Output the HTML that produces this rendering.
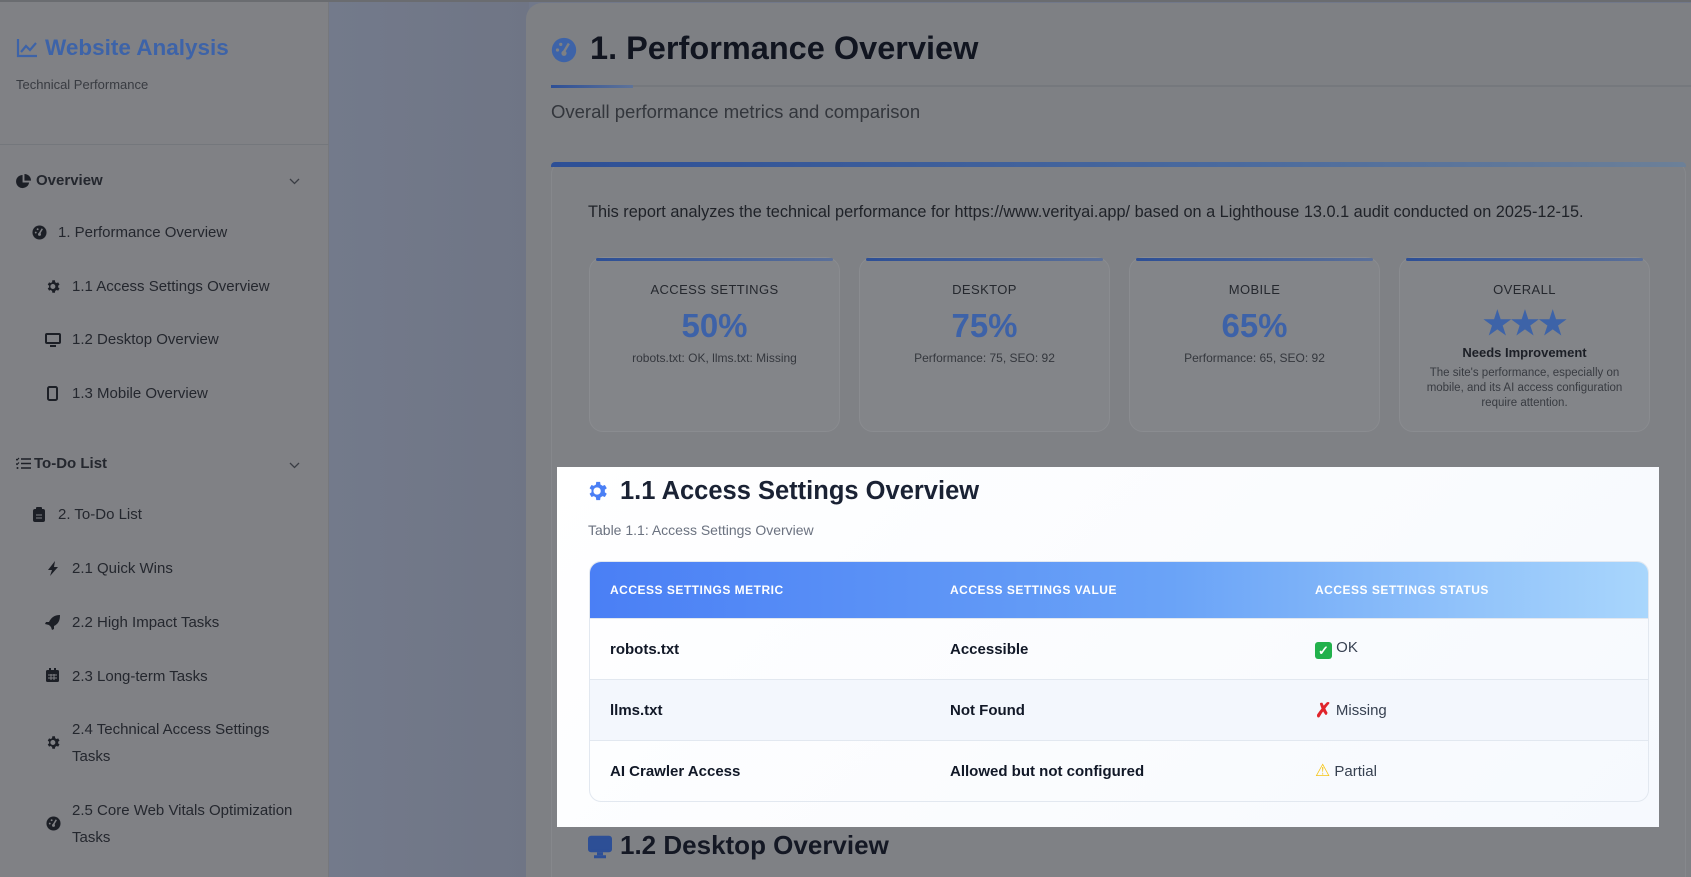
<!DOCTYPE html>
<html><head><meta charset="utf-8"><style>
*{margin:0;padding:0;box-sizing:border-box}
html,body{width:1691px;height:877px;overflow:hidden}
body{background:#71788a;font-family:"Liberation Sans",sans-serif;position:relative;color:#1c1f26}
.a{position:absolute;white-space:nowrap}
#top{position:absolute;left:0;top:0;width:1691px;height:2px;background:#6a6c70;z-index:5}
#side{position:absolute;left:0;top:0;width:329px;height:877px;background:#808185;border-right:1px solid #76787d}
#gap{position:absolute;left:329px;top:0;width:200px;height:877px;background:linear-gradient(90deg,#737a8b,#6f7585)}
#main{position:absolute;left:526px;top:3px;width:1165px;height:874px;background:#7e8084;border-radius:16px 0 0 0}
.nav{font-size:15px;color:#24272e}
.ic{position:absolute}
.box{position:absolute;left:551px;top:162px;width:1135px;height:715px;background:#7f8185;border:1px solid #86888c;border-bottom:none;border-radius:12px 12px 0 0}
.bar{position:absolute;left:551px;top:162px;width:1135px;height:5px;border-radius:4px 4px 0 0;background:linear-gradient(90deg,#2d4f96,#4a6a9e 60%,#6c8098)}
.card{position:absolute;top:257px;width:251px;height:175px;background:#838589;border:1px solid #8a8c90;border-radius:14px;text-align:center}
.card .t{position:absolute;top:0;left:6px;right:6px;height:3px;background:linear-gradient(90deg,#2d4f96,#5b7099);border-radius:2px}
.lab{position:absolute;top:24px;width:100%;font-size:13px;letter-spacing:.4px;color:#25282e}
.pct{position:absolute;top:49px;width:100%;font-size:33px;font-weight:bold;color:#3d62a8}
.sub{position:absolute;top:93px;width:100%;font-size:12px;color:#34373d}
#hl{position:absolute;left:557px;top:467px;width:1102px;height:360px;background:linear-gradient(135deg,#ffffff,#f6f9fe);z-index:20}
table{position:absolute;left:32px;top:94px;width:1060px;border-collapse:separate;border-spacing:0;border:1px solid #e2e8f0;border-radius:12px;overflow:hidden}
th{height:56px;text-align:left;font-size:12px;color:#fff;letter-spacing:.5px;padding-left:20px;background:transparent}
thead tr{background:linear-gradient(90deg,#4a7ff5,#6aa3f7 55%,#a9d6fc)}
td{height:61px;padding-left:20px;font-size:15px;font-weight:bold;color:#111827;border-top:1px solid #e2e8f0}
td.s{font-weight:normal;color:#374151}
tr.alt td{background:#f3f7fd}
</style></head><body>
<svg width="0" height="0" style="position:absolute"><defs>
<path id="gear" d="M12 8a4 4 0 1 0 0 8 4 4 0 0 0 0-8zm8.4 5.3l2.2 1.7-2.1 3.6-2.6-1a8 8 0 0 1-2.2 1.3L15.3 22h-4.2l-.4-3.1a8 8 0 0 1-2.2-1.3l-2.6 1-2.1-3.6 2.2-1.7a8 8 0 0 1 0-2.6L3.8 9l2.1-3.6 2.6 1a8 8 0 0 1 2.2-1.3L11.1 2h4.2l.4 3.1a8 8 0 0 1 2.2 1.3l2.6-1L22.6 9l-2.2 1.7a8 8 0 0 1 0 2.6z" transform="translate(-1 0)"/>
</defs></svg>
<div id="top"></div>
<div id="side">
 <svg class="ic" style="left:16px;top:38px" width="22" height="20" viewBox="0 0 22 20"><path d="M2 1v17h19" fill="none" stroke="#3d63a8" stroke-width="2.2"/><path d="M5 14l5-6 4 4 6-7" fill="none" stroke="#3d63a8" stroke-width="2.2"/></svg>
 <div class="a" style="left:45px;top:35px;font-size:22.5px;font-weight:bold;color:#3d63a8">Website Analysis</div>
 <div class="a" style="left:16px;top:77px;font-size:13px;color:#383b41">Technical Performance</div>
 <div style="position:absolute;left:0;top:144px;width:329px;height:1px;background:#74777c"></div>
 <svg class="ic" style="left:16px;top:174px" width="15" height="15" viewBox="0 0 16 16"><path d="M7 1a7 7 0 1 0 7 8H7z" fill="#1c1f26"/><path d="M9 0v7h7a7 7 0 0 0-7-7z" fill="#1c1f26"/></svg>
 <div class="a nav" style="left:36px;top:172px;font-weight:bold">Overview</div>
 <svg class="ic" style="left:289px;top:178px" width="11" height="7" viewBox="0 0 11 7"><path d="M1 1l4.5 4.5L10 1" fill="none" stroke="#3a3d44" stroke-width="1.3"/></svg>
 <svg class="ic" style="left:32px;top:225px" width="15" height="15" viewBox="0 0 16 16"><circle cx="8" cy="8" r="7.5" fill="#1c1f26"/><path d="M8 9l3-5" stroke="#808185" stroke-width="1.6"/><circle cx="4" cy="8" r="1" fill="#808185"/><circle cx="6" cy="4.5" r="1" fill="#808185"/><circle cx="8" cy="10" r="1.6" fill="#808185"/></svg>
 <div class="a nav" style="left:58px;top:224px">1. Performance Overview</div>
 <svg class="ic" style="left:46px;top:279px" width="15" height="15" viewBox="0 0 24 24"><use href="#gear" fill="#1c1f26"/></svg>
 <div class="a nav" style="left:72px;top:278px">1.1 Access Settings Overview</div>
 <svg class="ic" style="left:45px;top:333px" width="16" height="15" viewBox="0 0 16 15"><rect x="1" y="1" width="14" height="9" rx="1" fill="none" stroke="#1c1f26" stroke-width="2"/><rect x="5" y="12" width="6" height="2" fill="#1c1f26"/></svg>
 <div class="a nav" style="left:72px;top:331px">1.2 Desktop Overview</div>
 <svg class="ic" style="left:47px;top:386px" width="11" height="15" viewBox="0 0 11 15"><rect x="1" y="1" width="9" height="13" rx="1.5" fill="none" stroke="#1c1f26" stroke-width="2"/></svg>
 <div class="a nav" style="left:72px;top:385px">1.3 Mobile Overview</div>
 <svg class="ic" style="left:16px;top:457px" width="15" height="13" viewBox="0 0 15 13"><path d="M5 2h10M5 6.5h10M5 11h10" stroke="#1c1f26" stroke-width="1.6"/><path d="M0 2l1 1 2-2M0 6.5l1 1 2-2" stroke="#1c1f26" stroke-width="1.2" fill="none"/><circle cx="1.5" cy="11" r="1" fill="#1c1f26"/></svg>
 <div class="a nav" style="left:34px;top:455px;font-weight:bold">To-Do List</div>
 <svg class="ic" style="left:289px;top:462px" width="11" height="7" viewBox="0 0 11 7"><path d="M1 1l4.5 4.5L10 1" fill="none" stroke="#3a3d44" stroke-width="1.3"/></svg>
 <svg class="ic" style="left:33px;top:507px" width="12" height="15" viewBox="0 0 12 15"><rect x="0" y="2" width="12" height="13" rx="2" fill="#1c1f26"/><rect x="3" y="0" width="6" height="4" rx="1" fill="#1c1f26"/><path d="M3 8h6M3 11h6" stroke="#808185"/></svg>
 <div class="a nav" style="left:58px;top:506px">2. To-Do List</div>
 <svg class="ic" style="left:47px;top:561px" width="12" height="15" viewBox="0 0 12 15"><path d="M8 0L1 9h4l-2 6 8-9H7z" fill="#1c1f26"/></svg>
 <div class="a nav" style="left:72px;top:560px">2.1 Quick Wins</div>
 <svg class="ic" style="left:45px;top:615px" width="15" height="15" viewBox="0 0 15 15"><path d="M15 0C9 0 6 3 4 7L1 7 0 9l4 1 2 2 1 3 2-1 0-3c4-2 6-5 6-11z" fill="#1c1f26"/></svg>
 <div class="a nav" style="left:72px;top:614px">2.2 High Impact Tasks</div>
 <svg class="ic" style="left:46px;top:668px" width="13" height="14" viewBox="0 0 13 14"><rect x="0" y="2" width="13" height="12" rx="1.5" fill="#1c1f26"/><rect x="3" y="0" width="2" height="3" fill="#1c1f26"/><rect x="8" y="0" width="2" height="3" fill="#1c1f26"/><path d="M2 7h9M2 10h9M5 6v6M8 6v6" stroke="#808185"/></svg>
 <div class="a nav" style="left:72px;top:668px">2.3 Long-term Tasks</div>
 <svg class="ic" style="left:46px;top:735px" width="15" height="15" viewBox="0 0 24 24"><use href="#gear" fill="#1c1f26"/></svg>
 <div class="a nav" style="left:72px;top:721px">2.4 Technical Access Settings</div>
 <div class="a nav" style="left:72px;top:748px">Tasks</div>
 <svg class="ic" style="left:46px;top:816px" width="15" height="15" viewBox="0 0 16 16"><circle cx="8" cy="8" r="7.5" fill="#1c1f26"/><path d="M8 9l3-5" stroke="#808185" stroke-width="1.6"/><circle cx="4" cy="8" r="1" fill="#808185"/><circle cx="6" cy="4.5" r="1" fill="#808185"/><circle cx="8" cy="10" r="1.6" fill="#808185"/></svg>
 <div class="a nav" style="left:72px;top:802px">2.5 Core Web Vitals Optimization</div>
 <div class="a nav" style="left:72px;top:829px">Tasks</div>
</div>
<div id="gap"></div>
<div id="main"></div>
<svg class="ic" style="left:551px;top:37px" width="26" height="26" viewBox="0 0 16 16"><circle cx="8" cy="8" r="7.5" fill="#3d63a8"/><path d="M8 9l3-5" stroke="#7e8084" stroke-width="1.5"/><circle cx="4" cy="8" r="1" fill="#7e8084"/><circle cx="6" cy="4.5" r="1" fill="#7e8084"/><circle cx="8" cy="10" r="1.6" fill="#7e8084"/></svg>
<div class="a" style="left:590px;top:30px;font-size:32.5px;font-weight:bold;color:#111520">1. Performance Overview</div>
<div style="position:absolute;left:551px;top:85px;width:1140px;height:2px;background:#75787d"></div>
<div style="position:absolute;left:551px;top:85px;width:82px;height:3px;background:linear-gradient(90deg,#2d4f96,#5e7399)"></div>
<div class="a" style="left:551px;top:101px;font-size:18.5px;color:#33363c">Overall performance metrics and comparison</div>
<div class="box"></div><div class="bar"></div>
<div class="a" style="left:588px;top:203px;font-size:16.3px;color:#1f2228">This report analyzes the technical performance for https://www.verityai.app/ based on a Lighthouse 13.0.1 audit conducted on 2025-12-15.</div>
<div class="card" style="left:589px"><div class="t"></div><div class="lab">ACCESS SETTINGS</div><div class="pct">50%</div><div class="sub">robots.txt: OK, llms.txt: Missing</div></div>
<div class="card" style="left:859px"><div class="t"></div><div class="lab">DESKTOP</div><div class="pct">75%</div><div class="sub">Performance: 75, SEO: 92</div></div>
<div class="card" style="left:1129px"><div class="t"></div><div class="lab">MOBILE</div><div class="pct">65%</div><div class="sub">Performance: 65, SEO: 92</div></div>
<div class="card" style="left:1399px"><div class="t"></div><div class="lab">OVERALL</div>
 <div class="pct" style="top:46px;font-size:32px;letter-spacing:-1px;color:#3d63a8">&#9733;&#9733;&#9733;</div>
 <div class="sub" style="top:87px;font-size:13px;font-weight:bold;color:#1c1f26">Needs Improvement</div>
 <div class="sub" style="top:108px;font-size:11.5px;line-height:15px;white-space:normal;padding:0 22px;color:#383b41">The site's performance, especially on mobile, and its AI access configuration require attention.</div></div>
<div id="hl">
 <svg class="ic" style="left:30px;top:13px" width="22" height="22" viewBox="0 0 24 24"><use href="#gear" fill="#4a7ff5"/></svg>
 <div class="a" style="left:63px;top:10px;font-size:25.5px;font-weight:bold;color:#1a2234">1.1 Access Settings Overview</div>
 <div class="a" style="left:31px;top:55px;font-size:14px;color:#6b7280">Table 1.1: Access Settings Overview</div>
 <table>
  <thead><tr><th style="width:340px">ACCESS SETTINGS METRIC</th><th style="width:365px">ACCESS SETTINGS VALUE</th><th>ACCESS SETTINGS STATUS</th></tr></thead>
  <tbody>
   <tr><td>robots.txt</td><td>Accessible</td><td class="s"><span style="display:inline-block;width:17px;height:17px;background:#22b14c;border-radius:3px;color:#fff;font-size:13px;text-align:center;line-height:17px;vertical-align:-3px;font-weight:bold">&#10003;</span> OK</td></tr>
   <tr class="alt"><td>llms.txt</td><td>Not Found</td><td class="s"><span style="color:#e0242b;font-weight:bold;font-size:20px;vertical-align:-2px">&#10007;</span> Missing</td></tr>
   <tr><td>AI Crawler Access</td><td>Allowed but not configured</td><td class="s"><span style="color:#f5c518;font-size:17px">&#9888;</span> Partial</td></tr>
  </tbody>
 </table>
</div>
<svg class="ic" style="left:588px;top:835px" width="24" height="24" viewBox="0 0 16 15"><rect x="1" y="1" width="14" height="9" rx="1" fill="#2d4f96" stroke="#2d4f96" stroke-width="2"/><rect x="6" y="11" width="4" height="2" fill="#2d4f96"/><rect x="4" y="13" width="8" height="2" fill="#2d4f96"/></svg>
<div class="a" style="left:620px;top:830px;font-size:26px;font-weight:bold;color:#141824">1.2 Desktop Overview</div>
</body></html>
